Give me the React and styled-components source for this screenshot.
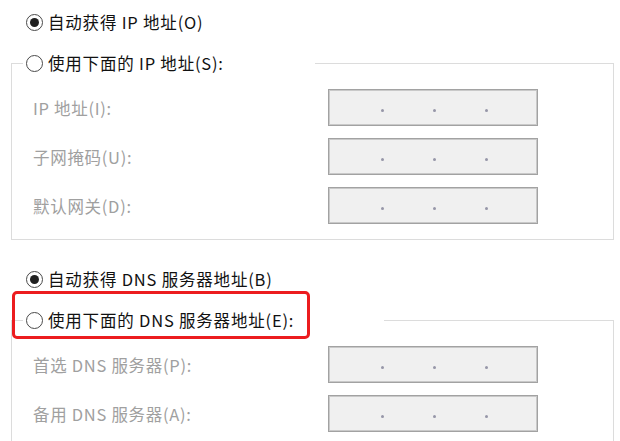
import styled, { createGlobalStyle } from "styled-components";

const GlobalStyle = createGlobalStyle`
  html, body {
    margin: 0;
    padding: 0;
    background: #ffffff;
  }
  body {
    font-family: "Noto Sans CJK SC", "Noto Sans", sans-serif;
  }
`;

const ipRows = [{ label: "IP 地址(I):" }, { label: "子网掩码(U):" }, { label: "默认网关(D):" }];

const dnsRows = [{ label: "首选 DNS 服务器(P):" }, { label: "备用 DNS 服务器(A):" }];

function Radio({ checked }) {
  return <RadioCircle>{checked && <RadioDot />}</RadioCircle>;
}

function RadioOption({ checked, children }) {
  return (
    <Option>
      <Radio checked={checked} />
      <OptionText>{children}</OptionText>
    </Option>
  );
}

function IpInput() {
  return (
    <IpBox>
      <Octet />
      <Dot />
      <Octet />
      <Dot />
      <Octet />
      <Dot />
      <Octet />
    </IpBox>
  );
}

function FieldRows({ rows }) {
  return (
    <Rows>
      {rows.map((r) => (
        <Row key={r.label}>
          <FieldLabel>{r.label}</FieldLabel>
          <IpInput />
        </Row>
      ))}
    </Rows>
  );
}

export default function App() {
  return (
    <>
      <GlobalStyle />
      <Page>
        <TopOption>
          <RadioOption checked>自动获得 IP 地址(O)</RadioOption>
        </TopOption>
        <Group>
          <Legend width={292}>
            <RadioOption>使用下面的 IP 地址(S):</RadioOption>
          </Legend>
          <FieldRows rows={ipRows} />
        </Group>

        <TopOption spaced>
          <RadioOption checked>自动获得 DNS 服务器地址(B)</RadioOption>
        </TopOption>
        <Group>
          <Legend width={361}>
            <RadioOption>使用下面的 DNS 服务器地址(E):</RadioOption>
            {/* 红色标注框 */}
            <Highlight />
          </Legend>
          <FieldRows rows={dnsRows} />
        </Group>
      </Page>
    </>
  );
}

const Page = styled.div`
  height: 441px;
  overflow: hidden;
  box-sizing: border-box;
  padding: 10px 6px 0 11px;
`;

const TopOption = styled.div`
  margin-left: 15px;
  margin-top: ${(p) => (p.spaced ? "27px" : "0")};
  height: 24px;
  display: flex;
  align-items: center;
`;

const Option = styled.div`
  display: flex;
  align-items: center;
  gap: 5px;
  height: 24px;
`;

const OptionText = styled.span`
  font-size: 16.5px;
  letter-spacing: 0.8px;
  line-height: 24px;
  color: #111111;
  white-space: nowrap;
`;

const RadioCircle = styled.span`
  box-sizing: border-box;
  width: 17px;
  height: 17px;
  border-radius: 50%;
  border: 1.5px solid #4a4a4a;
  background: #ffffff;
  display: flex;
  align-items: center;
  justify-content: center;
  flex-shrink: 0;
`;

const RadioDot = styled.span`
  width: 9px;
  height: 9px;
  border-radius: 50%;
  background: #202020;
`;

const Group = styled.fieldset`
  margin: 17px 0 0 0;
  border: 1px solid #dcdcdc;
  padding: 14px 0 15px 21px;
  min-inline-size: 0;
`;

const Legend = styled.legend`
  position: relative;
  box-sizing: border-box;
  width: ${(p) => p.width}px;
  margin-left: -10px;
  padding: 0 0 0 3px;
  height: 24px;
`;

const Highlight = styled.span`
  position: absolute;
  left: -11px;
  top: -17px;
  width: 298px;
  height: 48px;
  box-sizing: border-box;
  border: 3px solid #ec1c1f;
  border-radius: 5px;
  pointer-events: none;
`;

const Rows = styled.div`
  display: grid;
  row-gap: 12px;
`;

const Row = styled.div`
  display: grid;
  grid-template-columns: 295px 210px;
  align-items: center;
  height: 37px;
`;

const FieldLabel = styled.span`
  font-size: 16.5px;
  letter-spacing: 0.7px;
  color: #a0a0a0;
  white-space: nowrap;
`;

const IpBox = styled.div`
  box-sizing: border-box;
  height: 37px;
  width: 210px;
  border: 1px solid #a2a2a2;
  box-shadow: inset 0 0 0 1px #c9c9c9;
  background: #f0f0f0;
  display: flex;
  align-items: center;
  padding-left: 3px;
`;

const Octet = styled.span`
  flex: 1;
`;

const Dot = styled.span`
  width: 3px;
  height: 3px;
  margin-top: 6px;
  border-radius: 50%;
  background: #9696a8;
`;
